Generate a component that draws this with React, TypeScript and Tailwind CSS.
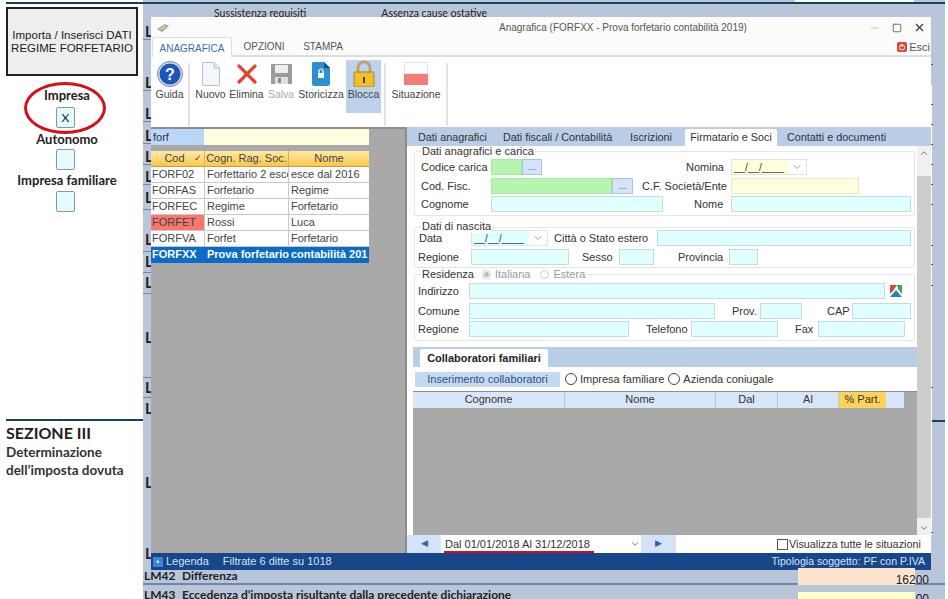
import type { ReactNode } from 'react';
import { ChevronDown, ChevronUp, Minus, Square, X } from 'lucide-react';

// rows of the form behind the window: height, has an L, bottom padding, has a line
const stripRows: [number, boolean, number, boolean][] = [
  [23, true, 0, true], [51, true, 0, true], [31, true, 0, true], [22, true, 0, true],
  [21, true, 0, true], [20, true, 0, true], [25, true, 4, true], [42, true, 4, true],
  [21, true, 3, true], [21, true, 3, true], [51, true, 0, false], [33, false, 0, true],
  [20, true, 2, true], [22, true, 4, false], [70, true, 0, false], [78, true, 7, false],
];

const tickGaps = [48, 40, 20, 20, 20, 20, 20, 41, 19, 21, 102, 145];

const grid = [
  ['FORF02', 'Forfettario 2 esce', 'esce dal 2016'],
  ['FORFAS', 'Forfetario', 'Regime'],
  ['FORFEC', 'Regime', 'Forfetario'],
  ['FORFET', 'Rossi', 'Luca'],
  ['FORFVA', 'Forfet', 'Forfetario'],
];

const tones = {
  cyan: 'border-[#c6dcdc] bg-[#e0ffff]',
  green: 'border-[#a9e8a6] bg-[#b5f5b0]',
  yellow: 'border-[#ecebc0] bg-[#ffffe0]',
};

function Box({ className = '', tone = 'cyan' }: { className?: string; tone?: keyof typeof tones }) {
  return <div className={`h-[16px] shrink-0 border ${tones[tone]} ${className}`} />;
}

function Label({ className = '', children }: { className?: string; children: ReactNode }) {
  return <span className={`shrink-0 whitespace-nowrap text-[11px] leading-[16px] text-[#333] ${className}`}>{children}</span>;
}

function DateBox({ className = '' }: { className?: string }) {
  return (
    <div className={`flex h-[16px] shrink-0 items-center justify-between border border-[#e3e3e3] ${className}`}>
      <span className="flex h-full flex-1 items-center pl-[2px] text-[10px] text-[#333]">__/__/____</span>
      <span className="flex h-full items-center bg-white px-[3px]"><ChevronDown size={12} strokeWidth={1.2} color="#555" /></span>
    </div>
  );
}

function Radio({ className = '' }: { className?: string }) {
  return <span className={`inline-block size-[12px] shrink-0 rounded-full border border-[#444] bg-white ${className}`} />;
}

function RibbonItem({ label, icon, className = '', muted }: { label: string; icon: ReactNode; className?: string; muted?: boolean }) {
  return (
    <div className={`flex h-[53px] shrink-0 flex-col items-center ${className}`}>
      <div className="flex h-[27px] items-center justify-center">{icon}</div>
      <span className={`whitespace-nowrap text-[10.5px] leading-[14px] ${muted ? 'text-[#aaa]' : 'text-[#444]'}`}>{label}</span>
    </div>
  );
}

function Divider() {
  return <div className="mt-[3px] h-[63px] w-[2px] shrink-0 bg-[#e2e2e2]" />;
}

function Fieldset({ className = '', children }: { className?: string; children: ReactNode }) {
  return <div className={`shrink-0 rounded-[2px] border border-[#e6e6e6] ${className}`}>{children}</div>;
}

function Legend({ className = '', children }: { className?: string; children: ReactNode }) {
  return <div className={`absolute flex items-center gap-[4px] bg-white px-[1px] text-[11px] leading-[13px] text-[#333] ${className}`}>{children}</div>;
}

export default function App() {
  return (
    <div className="relative flex h-[599px] w-[948px] overflow-hidden bg-white font-['Liberation_Sans',sans-serif]">
      {/* Document behind the window */}
      <div className="flex w-[143px] shrink-0 flex-col font-['Lato',sans-serif]">
        <div className="ml-[6px] mt-[2px] h-[2px] w-[137px] bg-[#17405f]" />
        <div className="ml-[6px] mt-[3px] flex h-[69px] w-[132px] flex-col items-center justify-center border-2 border-[#222] bg-[#eeeeee] font-['Liberation_Sans',sans-serif] text-[11.5px] leading-[13px] text-[#222]">
          <span>Importa / Inserisci DATI</span>
          <span>REGIME FORFETARIO</span>
        </div>
        <div className="mt-[12px] pr-[9px] text-center text-[13px] font-bold leading-[15px] text-[#222]">Impresa</div>
        <div className="ml-[56px] mt-[4px] flex h-[21px] w-[19px] items-center justify-center rounded-[2px] border border-[#7f9aa2] bg-[#e4fbff] text-[12px] text-[#222]">X</div>
        <div className="mt-[4px] pr-[9px] text-center text-[13px] font-bold leading-[15px] text-[#222]">Autonomo</div>
        <div className="ml-[56px] mt-[2px] h-[21px] w-[19px] rounded-[2px] border border-[#7f9aa2] bg-[#e4fbff]" />
        <div className="mt-[3px] pr-[9px] text-center text-[13px] font-bold leading-[15px] text-[#222]">Impresa familiare</div>
        <div className="ml-[56px] mt-[3px] h-[21px] w-[19px] rounded-[2px] border border-[#7f9aa2] bg-[#e4fbff]" />
        <div className="ml-[6px] mt-[207px] h-[2px] w-[137px] bg-[#17405f]" />
        <div className="ml-[6px] mt-[2px] text-[16px] font-bold leading-[20px] text-[#222]">SEZIONE III</div>
        <div className="ml-[6px] text-[13.5px] font-bold leading-[18px] text-[#333]">Determinazione</div>
        <div className="ml-[6px] text-[13.5px] font-bold leading-[18px] text-[#333]">dell’imposta dovuta</div>
      </div>

      <div className="flex w-[802px] shrink-0 flex-col bg-[#b9c6da] font-['Lato',sans-serif]">
        <div className="relative h-[17px] shrink-0 overflow-hidden">
          <div className="mt-[2px] h-[2px] bg-[#17405f]" />
          <div className="absolute left-[652px] top-0 h-[2px] w-[119px] bg-white" />
          <div className="flex text-[10.5px] leading-[14px] text-[#222]">
            <span className="ml-[71px] mt-[2px]">Sussistenza requisiti</span>
            <span className="ml-[75px] mt-[2px]">Assenza cause ostative</span>
          </div>
        </div>

        <div className="flex min-h-0 flex-1">
          <div className="flex w-[8px] shrink-0 flex-col">
            {stripRows.map(([h, hasL, pb, line], i) => (
              <div
                key={i}
                style={{ height: h, paddingBottom: pb }}
                className={`flex shrink-0 items-end pl-[2px] text-[15px] font-bold leading-[15px] text-[#222] ${line ? 'border-b border-[#6d87a8]' : ''}`}
              >
                {hasL ? 'L' : null}
              </div>
            ))}
          </div>
          <div className="flex-1" />
          <div className="flex w-[2px] shrink-0 flex-col">
            <div className="h-[68px] shrink-0" />
            <div className="h-[450px] shrink-0 bg-white" />
          </div>
          <div className="flex w-[3px] -ml-[2px] shrink-0 flex-col">
            {tickGaps.map((g, i) => (
              <div key={i} style={{ height: g }} className="flex shrink-0 flex-col justify-end">
                <div className="h-[1px] bg-[#556]" />
              </div>
            ))}
          </div>
          <div className="w-[13px] shrink-0 -ml-[1px]">
            <div className="mt-[403px] h-[2px] bg-[#17405f]" />
          </div>
        </div>

        <div className="flex h-[31px] shrink-0 flex-col text-[12px] font-bold leading-[14px] text-[#222]">
          <div className="flex h-[17px] shrink-0 items-start border-b-2 border-[#6d87a8] pl-[1px] pt-[1px]">
            <span className="w-[38px]">LM42</span>
            <span>Differenza</span>
            <div className="relative z-10 -mt-[1px] ml-auto mr-[30px] h-[17px] w-[117px] bg-[#fde4cc] font-['Liberation_Sans',sans-serif] text-[12px] font-normal">
              <span className="absolute right-[-14px] top-[5px]">16200</span>
            </div>
          </div>
          <div className="flex h-[14px] items-start overflow-hidden pl-[1px] pt-[3px]">
            <span className="w-[38px]">LM43</span>
            <span>Eccedenza d’imposta risultante dalla precedente dichiarazione</span>
            <div className="relative ml-auto mr-[30px] mt-[4px] h-[8px] w-[117px] bg-[#ffffc8] font-['Liberation_Sans',sans-serif] text-[12px] font-normal">
              <span className="absolute right-[-14px] top-0">00</span>
            </div>
          </div>
        </div>
      </div>

      {/* Red marker round Impresa */}
      <div className="absolute left-[24px] top-[82px] h-[52px] w-[82px] rounded-[50%] border-[3px] border-[#d4101a]" />

      {/* Application window */}
      <div className="absolute left-[151px] top-[17px] flex h-[553px] w-[780px] flex-col bg-white">
        <div className="absolute left-[145px] top-0 h-[21px] w-[54px] border-t-[3px] border-[#f59a1c] bg-[#fff6ec]" />
        <div className="relative flex h-[21px] shrink-0 items-center bg-[#fbfbfb]">
          <svg width="14" height="12" viewBox="0 0 14 12" className="ml-[5px]">
            <path d="M1 7 L9 2 L13 4 L6 10 Z" fill="#8fa3c4" />
            <path d="M3 7 L9 3 L11 4 L6 8 Z" fill="#e8c96a" />
          </svg>
          <span className="relative ml-[329px] text-[10px] text-[#555]">Anagrafica (FORFXX - Prova forfetario contabilità 2019)</span>
          <div className="ml-auto mr-[5px] flex items-center gap-[11px] text-[#333]">
            <Minus size={12} strokeWidth={1} color="#888" />
            <Square size={10} strokeWidth={1.6} />
            <X size={13} strokeWidth={2} />
          </div>
        </div>
        <div className="relative flex h-[19px] shrink-0 items-end border-b-2 border-[#dedede] bg-[#fbfbfb] pl-[1px] text-[10px]">
          <div className="mb-[-2px] flex h-[20px] w-[80px] items-center justify-center rounded-t-[2px] border border-b-0 border-[#dedede] bg-white pt-[2px] text-[#3c6aa5]">ANAGRAFICA</div>
          <div className="flex h-[20px] w-[64px] items-center justify-center pt-[2px] text-[#555]">OPZIONI</div>
          <div className="relative flex h-[20px] w-[54px] items-center justify-center pt-[2px] text-[#555]">STAMPA</div>
          <div className="ml-auto mr-[1px] flex h-[16px] items-center gap-[2px] text-[11px] text-[#555]">
            <svg width="10" height="10" viewBox="0 0 10 10">
              <rect width="10" height="10" rx="2" fill="#e3413a" />
              <circle cx="5" cy="5.4" r="2.6" fill="none" stroke="#fff" strokeWidth="1" />
              <path d="M5 1.8 V5" stroke="#fff" strokeWidth="1" />
            </svg>
            <span>Esci</span>
          </div>
        </div>

        <div className="flex h-[70px] shrink-0 items-start bg-white pl-[3px] pt-[3px]">
          <RibbonItem
            label="Guida"
            className="w-[31px]"
            icon={
              <svg width="26" height="26" viewBox="0 0 26 26">
                <circle cx="13" cy="13" r="12.5" fill="#cfd9ea" stroke="#6f88b0" />
                <circle cx="13" cy="13" r="10.5" fill="#1f55b8" />
                <text x="13" y="18.5" textAnchor="middle" fontSize="16" fontWeight="700" fill="#fff" fontFamily="Liberation Sans">?</text>
              </svg>
            }
          />
          <div className="ml-[3px] mr-[5px]"><Divider /></div>
          <RibbonItem
            label="Nuovo"
            className="w-[31px]"
            icon={
              <svg width="18" height="24" viewBox="0 0 18 24">
                <path d="M.5.5 H12 L17.5 6 V23.5 H.5 Z" fill="#f3f7fd" stroke="#b7c2d2" />
                <path d="M12 .5 V6 H17.5" fill="#dfe6f0" stroke="#b7c2d2" />
              </svg>
            }
          />
          <RibbonItem
            label="Elimina"
            className="ml-[4px] w-[33px]"
            icon={
              <svg width="20" height="20" viewBox="0 0 20 20">
                <path d="M2 2 L18 18 M18 2 L2 18" stroke="#e2452c" strokeWidth="3.2" strokeLinecap="round" />
              </svg>
            }
          />
          <RibbonItem
            label="Salva"
            muted
            className="ml-[5px] w-[26px]"
            icon={
              <svg width="21" height="20" viewBox="0 0 21 20">
                <rect x="0" y="0" width="21" height="20" rx="1" fill="#9b9b9b" />
                <rect x="4" y="1" width="13" height="8" fill="#ededed" />
                <rect x="4" y="13" width="13" height="7" fill="#e0e0e0" />
                <rect x="7" y="14" width="3" height="5" fill="#8a8a8a" />
              </svg>
            }
          />
          <RibbonItem
            label="Storicizza"
            className="ml-[4px] w-[46px]"
            icon={
              <svg width="18" height="24" viewBox="0 0 18 24">
                <path d="M1 0 H12 L18 6 V22 a2 2 0 0 1-2 2 H2 a2 2 0 0 1-2-2 V1 Z" fill="#2d8fd2" />
                <path d="M12 0 L18 6 H12 Z" fill="#174f7d" />
                <rect x="6" y="11" width="6" height="5" fill="#fff" />
                <path d="M7 11 V9 a2 2 0 0 1 4 0 V11" fill="none" stroke="#fff" strokeWidth="1.2" />
              </svg>
            }
          />
          <div className="ml-[2px] h-[53px] w-[35px] shrink-0 bg-[#bed2ee]">
            <RibbonItem
              label="Blocca"
              className="w-[35px]"
              icon={
                <svg width="22" height="26" viewBox="0 0 22 26">
                  <path d="M5 11 V7 a6 6 0 0 1 12 0 V11" fill="none" stroke="#b9a25a" strokeWidth="2.6" />
                  <rect x="1" y="11" width="20" height="15" rx="1" fill="#efbf2c" stroke="#a8831a" />
                  <rect x="10" y="16" width="2" height="6" fill="#5a4210" />
                </svg>
              }
            />
          </div>
          <div className="ml-[3px] mr-[5px]"><Divider /></div>
          <RibbonItem
            label="Situazione"
            className="w-[50px]"
            icon={
              <svg width="24" height="23" viewBox="0 0 24 23">
                <rect x=".5" y=".5" width="23" height="11" fill="#fff" stroke="#e4e4e4" />
                <rect x="0" y="12" width="24" height="11" fill="#f47d78" />
              </svg>
            }
          />
          <div className="ml-[5px]"><Divider /></div>
        </div>

        <div className="flex min-h-0 flex-1">
          {/* Left list */}
          <div className="flex w-[256px] shrink-0 flex-col border-r-2 border-t-2 border-[#8d8d8d] bg-[#a9a9a9]">
            <div className="flex h-[16px] shrink-0">
              <div className="flex w-[53px] items-center bg-[#b9d7fb] pl-[2px] text-[11px] text-[#333]">forf</div>
              <div className="w-[165px] bg-[#ffffe0]" />
            </div>
            <div className="mt-[6px] w-[218px] text-[11px]">
              <div className="flex h-[16px] border-b border-[#b9a24a] bg-gradient-to-b from-[#fdeaa4] to-[#fdc642] text-[#444]">
                <div className="relative flex w-[54px] items-center justify-center border-r border-[#c9b56e] pr-[6px]">Cod<span className="absolute right-[2px] text-[9px]">✓</span></div>
                <div className="flex w-[84px] items-center justify-center border-r border-[#c9b56e]">Cogn. Rag. Soc.</div>
                <div className="flex flex-1 items-center justify-center">Nome</div>
              </div>
              {grid.map((r) => (
                <div key={r[0]} className="flex h-[16px] border-b border-[#c8c8c8] bg-white text-[#444]">
                  <div className={`w-[54px] border-r border-[#c8c8c8] pl-[1px] leading-[15px] ${r[0] === 'FORFET' ? 'bg-[#f9776d]' : ''}`}>{r[0]}</div>
                  <div className="w-[84px] overflow-hidden whitespace-nowrap border-r border-[#c8c8c8] pl-[2px] leading-[15px]">{r[1]}</div>
                  <div className="flex-1 overflow-hidden whitespace-nowrap pl-[2px] leading-[15px]">{r[2]}</div>
                </div>
              ))}
              <div className="flex h-[16px] bg-[#0a6cc6] font-bold leading-[15px] text-white">
                <div className="w-[54px] pl-[1px]">FORFXX</div>
                <div className="w-[84px] overflow-hidden whitespace-nowrap pl-[2px]">Prova forfetario</div>
                <div className="flex-1 overflow-hidden whitespace-nowrap pl-[2px]">contabilità 201</div>
              </div>
            </div>
          </div>

          {/* Right detail */}
          <div className="flex min-w-0 flex-1 flex-col">
            <div className="flex h-[19px] shrink-0 items-end bg-[#b9cde6] pl-[1px] text-[10.8px] text-[#333]">
              <div className="flex h-[17px] w-[95px] items-center pl-[10px]">Dati anagrafici</div>
              <div className="flex h-[17px] w-[127px] items-center">Dati fiscali / Contabilità</div>
              <div className="flex h-[17px] w-[55px] items-center">Iscrizioni</div>
              <div className="flex h-[17px] w-[92px] items-center justify-center rounded-t-[2px] bg-white">Firmatario e Soci</div>
              <div className="ml-[10px] flex h-[17px] items-center">Contatti e documenti</div>
            </div>

            <div className="flex min-h-0 flex-1">
              <div className="flex w-[510px] shrink-0 flex-col overflow-hidden pl-[7px]">
                <Fieldset className="relative mt-[5px] h-[65px] w-[501px] pl-[6px] pt-[7px]">
                  <Legend className="left-[6px] top-[-7px]">Dati anagrafici e carica</Legend>
                  <div className="flex items-center">
                    <Label className="w-[70px]">Codice carica</Label>
                    <Box className="w-[31px]" tone="green" />
                    <div className="flex h-[16px] w-[20px] items-center justify-center border border-[#a9c1e2] bg-[#d5e3f6] text-[9px] leading-none text-[#445]">...</div>
                    <Label className="ml-[144px] w-[45px]">Nomina</Label>
                    <DateBox className="w-[76px] bg-[#ffffe0]" />
                  </div>
                  <div className="mt-[3px] flex items-center">
                    <Label className="w-[70px]">Cod. Fisc.</Label>
                    <Box className="w-[121px]" tone="green" />
                    <div className="flex h-[16px] w-[21px] items-center justify-center border border-[#a9c1e2] bg-[#d5e3f6] text-[9px] leading-none text-[#445]">...</div>
                    <Label className="ml-[9px] w-[89px]">C.F. Società/Ente</Label>
                    <Box className="w-[128px]" tone="yellow" />
                  </div>
                  <div className="mt-[2px] flex items-center">
                    <Label className="w-[70px]">Cognome</Label>
                    <Box className="w-[172px]" />
                    <Label className="ml-[31px] w-[37px]">Nome</Label>
                    <Box className="w-[180px]" />
                  </div>
                </Fieldset>

                <Fieldset className="relative mt-[11px] h-[41px] w-[501px] pl-[3px] pt-[2px]">
                  <Legend className="left-[6px] top-[-8px]">Dati di nascita</Legend>
                  <div className="flex items-center">
                    <Label className="w-[53px] pl-[1px]">Data</Label>
                    <DateBox className="w-[77px] bg-[#e0ffff]" />
                    <Label className="ml-[6px] w-[103px]">Città o Stato estero</Label>
                    <Box className="w-[254px]" />
                  </div>
                  <div className="mt-[3px] flex items-center">
                    <Label className="w-[53px]">Regione</Label>
                    <Box className="w-[98px]" />
                    <Label className="ml-[13px] w-[37px]">Sesso</Label>
                    <Box className="w-[35px]" />
                    <Label className="ml-[24px] w-[51px]">Provincia</Label>
                    <Box className="w-[29px]" />
                  </div>
                </Fieldset>

                <Fieldset className="relative mt-[6px] h-[67px] w-[501px] pl-[3px] pt-[8px]">
                  <Legend className="left-[6px] top-[-7px]">
                    <span>Residenza</span>
                    <span className="ml-[4px] flex size-[9px] items-center justify-center rounded-full border border-[#ccc]"><span className="size-[5px] rounded-full bg-[#bbb]" /></span>
                    <span className="text-[#999]">Italiana</span>
                    <span className="ml-[6px] size-[9px] rounded-full border border-[#ccc]" />
                    <span className="text-[#999]">Estera</span>
                  </Legend>
                  <div className="flex items-center">
                    <Label className="w-[51px]">Indirizzo</Label>
                    <Box className="w-[416px]" />
                    <svg width="12" height="12" viewBox="0 0 12 12" className="ml-[5px]">
                      <path d="M0 12 L6 5 L12 12 Z" fill="#1f7fd0" />
                      <path d="M0 0 H7 L3 6 L0 9 Z" fill="#d8453a" />
                      <path d="M7 0 H12 V9 L8 4 Z" fill="#3fa650" />
                    </svg>
                  </div>
                  <div className="mt-[4px] flex items-center">
                    <Label className="w-[51px]">Comune</Label>
                    <Box className="w-[246px]" />
                    <Label className="ml-[17px] w-[28px]">Prov.</Label>
                    <Box className="w-[42px]" />
                    <Label className="ml-[25px] w-[25px]">CAP</Label>
                    <Box className="w-[59px]" />
                  </div>
                  <div className="mt-[2px] flex items-center">
                    <Label className="w-[51px]">Regione</Label>
                    <Box className="w-[160px]" />
                    <Label className="ml-[17px] w-[45px]">Telefono</Label>
                    <Box className="w-[87px]" />
                    <Label className="ml-[17px] w-[23px]">Fax</Label>
                    <Box className="w-[87px]" />
                  </div>
                </Fieldset>

                <div className="-ml-[1px] mt-[6px] flex min-h-0 w-[504px] flex-1 flex-col text-[11px] text-[#333]">
                  <div className="flex h-[20px] shrink-0 items-end bg-[#b9cde6] pl-[7px]">
                    <div className="flex h-[18px] w-[128px] items-center justify-center rounded-t-[2px] bg-white font-bold text-[#222]">Collaboratori familiari</div>
                  </div>
                  <div className="flex h-[24px] shrink-0 items-center pl-[2px]">
                    <div className="flex h-[15px] w-[145px] items-center justify-center bg-[#c6d9f2] text-[#2b4f86]">Inserimento collaboratori</div>
                    <Radio className="ml-[5px]" />
                    <span className="ml-[3px]">Impresa familiare</span>
                    <Radio className="ml-[4px]" />
                    <span className="ml-[3px]">Azienda coniugale</span>
                  </div>
                  <div className="flex-1 bg-[#a9a9a9]">
                    <div className="flex h-[17px] border-t border-[#8d8d8d] text-center leading-[15px]">
                      <div className="w-[152px] border-r border-[#b6c8de] bg-[#d7e6f8]">Cognome</div>
                      <div className="w-[151px] border-r border-[#b6c8de] bg-[#d7e6f8]">Nome</div>
                      <div className="w-[62px] border-r border-[#b6c8de] bg-[#d7e6f8]">Dal</div>
                      <div className="w-[61px] border-r border-[#b6c8de] bg-[#d7e6f8]">Al</div>
                      <div className="w-[47px] bg-[#fdd35c]">% Part.</div>
                      <div className="w-[18px] bg-[#d7e6f8]" />
                    </div>
                  </div>
                </div>
              </div>

              <div className="flex w-[14px] shrink-0 flex-col items-center bg-[#f0f0f0]">
                <ChevronUp size={10} className="mt-[2px]" color="#555" />
                <div className="mt-[18px] h-[342px] w-full bg-[#cdcdcd]" />
                <ChevronDown size={10} className="mb-[2px] mt-auto" color="#555" />
              </div>
            </div>

            <div className="flex h-[18px] shrink-0 items-center bg-white text-[11px] text-[#333]">
              <div className="flex h-full w-[34px] items-center justify-center bg-[#d5e3f6] text-[9px] text-[#2c63b0]">◀</div>
              <div className="relative ml-[1px] flex h-full w-[199px] items-center justify-between pl-[3px] pr-[1px]">
                <span>Dal 01/01/2018 Al 31/12/2018</span>
                <ChevronDown size={10} color="#555" />
                <div className="absolute bottom-0 left-[2px] h-[2px] w-[150px] bg-[#d4101a]" />
              </div>
              <div className="flex h-full w-[35px] items-center justify-center bg-[#d5e3f6] text-[9px] text-[#2c63b0]">▶</div>
              <span className="ml-[101px] size-[11px] border border-[#555]" />
              <span className="ml-[1px] whitespace-nowrap text-[10.8px]">Visualizza tutte le situazioni</span>
            </div>
          </div>
        </div>

        <div className="flex h-[17px] shrink-0 items-center bg-[#17468a] text-[11px] text-[#d5e3f6]">
          <span className="ml-[2px] flex size-[10px] items-center justify-center rounded-[1px] bg-[#3d83d6] text-[8px] leading-none text-white">▪</span>
          <span className="ml-[3px]">Legenda</span>
          <span className="ml-[14px]">Filtrate 6 ditte su 1018</span>
          <span className="ml-auto mr-[6px] text-[10.6px]">Tipologia soggetto: PF con P.IVA</span>
        </div>
      </div>
    </div>
  );
}
